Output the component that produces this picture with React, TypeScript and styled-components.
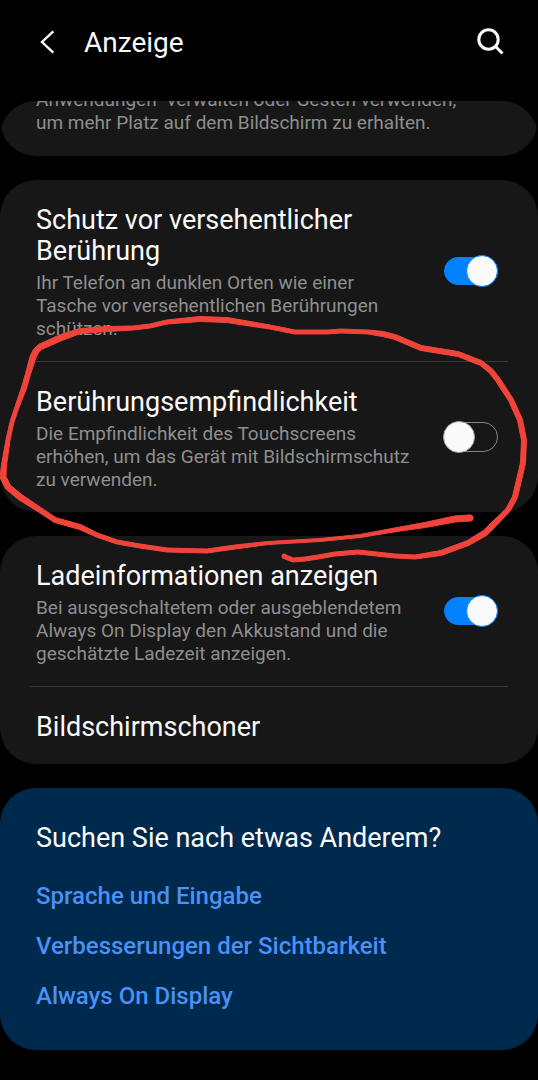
import { useState } from "react";
import styled, { createGlobalStyle } from "styled-components";

const GlobalStyle = createGlobalStyle`
  *, *::before, *::after { box-sizing: border-box; }
  body {
    margin: 0;
    background: #000;
    color: #fafafa;
    font-family: Roboto, "Noto Sans", sans-serif;
  }
  h1, h2, h3, p, ul { margin: 0; padding: 0; font-weight: 400; }
`;

const Screen = styled.div`
  position: relative;
  overflow: hidden;
  min-height: 100vh;
  background: #000;
`;

const Header = styled.header`
  display: flex;
  align-items: center;
  padding: 25px 32px 40px 36px;
`;

const IconButton = styled.button`
  display: flex;
  align-items: center;
  justify-content: center;
  height: 36px;
  padding: 0;
  border: 0;
  background: none;
  color: #fafafa;
`;

const PageTitle = styled.h1`
  flex: 1;
  margin-left: 24px;
  font-size: 28px;
  line-height: 36px;
`;

const Viewport = styled.main`
  display: flex;
  flex-direction: column;
  gap: 24px;
  overflow: hidden;
  padding-bottom: 30px;
  border-radius: 36px 36px 0 0;
`;

const Card = styled.section`
  border-radius: 36px;
  background: #171717;
`;

/* The card that is scrolled partly under the header */
const ScrolledCard = styled(Card)`
  margin-top: -13px;
  padding: 0 60px 22px 36px;
  border-radius: 0 0 36px 36px;
`;

const Row = styled.div`
  display: flex;
  align-items: center;
  justify-content: space-between;
  gap: 28px;
  padding: 21px 40px 21px 36px;
`;

const RowText = styled.div`
  display: flex;
  flex-direction: column;
  gap: 4px;
  padding-top: 4px;
`;

const RowTitle = styled.label`
  font-size: 27px;
  line-height: 31px;
`;

const Description = styled.p`
  color: #8e8e8e;
  font-size: 19px;
  line-height: 23px;
`;

const Divider = styled.hr`
  height: 1px;
  margin: 0 30px;
  border: 0;
  background: #383838;
`;

const Toggle = styled.input`
  position: relative;
  flex: none;
  appearance: none;
  width: 54px;
  height: 30px;
  margin: 0;
  border: 1px solid #858585;
  border-radius: 16px;

  &::before {
    content: "";
    position: absolute;
    top: -2px;
    left: -2px;
    width: 32px;
    height: 32px;
    border: 1px solid #a0a0a0;
    border-radius: 50%;
    background: #fafafa;
  }

  &:checked {
    height: 28px;
    border-color: #0381fe;
    background: #0381fe;
  }

  &:checked::before {
    top: -3px;
    left: 21px;
    border-color: #0381fe;
  }
`;

const PlainButton = styled.button`
  padding: 0;
  border: 0;
  background: none;
  color: inherit;
  font: inherit;
  font-size: 27px;
  line-height: 31px;
`;

const SuggestionCard = styled(Card)`
  padding: 34px 36px 42px;
  background: #002a4d;
`;

const SuggestionTitle = styled.h2`
  font-size: 27px;
  line-height: 32px;
`;

const LinkList = styled.ul`
  display: flex;
  flex-direction: column;
  gap: 26px;
  margin-top: 30px;
  list-style: none;
`;

const SuggestionLink = styled.a`
  display: block;
  color: #4a90f5;
  font-size: 24px;
  font-weight: 500;
  line-height: 24px;
  text-decoration: none;
`;

const Marker = styled.svg`
  position: absolute;
  top: 0;
  left: 0;
  pointer-events: none;
`;

type Sample = [x: number, y: number, width: number];

const MARKER_STROKE: Sample[] = [
  [470, 518, 6], [455, 519, 6], [425, 525, 5], [400, 529, 4], [360, 536, 3], [320, 540, 3],
  [268, 543, 3], [235, 547, 4], [207, 551, 4], [167, 550, 4], [140, 546, 4], [117, 542, 4],
  [97, 535, 4], [80, 527, 5], [55, 520, 5], [40, 510, 5], [20, 497, 6], [8, 487, 6],
  [3, 477, 6], [4, 465, 5], [8, 440, 4], [12, 422, 4], [17, 407, 4], [24, 388, 5], [28, 374, 5],
  [33, 357, 6], [36, 351, 6], [40, 347, 6], [60, 338, 6], [80, 331, 5], [107, 329, 5], [133, 328, 4],
  [150, 326, 4], [167, 322, 4], [200, 319, 5], [227, 320, 5], [270, 327, 4], [295, 332, 4],
  [328, 332, 4], [341, 331, 4], [368, 332, 4], [383, 334, 5], [395, 337, 5], [421, 348, 5], [458, 354, 5],
  [481, 363, 5], [491, 371, 5], [498, 380, 5], [511, 400, 5], [520, 420, 5], [524, 440, 5],
  [523, 463, 5], [515, 497, 5], [508, 510, 5], [485, 533, 6], [468, 543, 5], [441, 553, 5],
  [415, 557, 4], [395, 556, 4], [358, 552, 4], [335, 554, 4], [318, 557, 4], [305, 559, 4],
  [293, 560, 4], [283, 556, 4],
];

/* Outline of a pen stroke whose width changes along its way */
function strokeOutline(samples: Sample[]): string {
  const left: string[] = [];
  const right: string[] = [];
  samples.forEach(([x, y, w], i) => {
    const before = samples[Math.max(0, i - 1)];
    const after = samples[Math.min(samples.length - 1, i + 1)];
    const dx = after[0] - before[0];
    const dy = after[1] - before[1];
    const k = w / 2 / Math.hypot(dx, dy);
    left.push(`${(x - dy * k).toFixed(1)} ${(y + dx * k).toFixed(1)}`);
    right.unshift(`${(x + dy * k).toFixed(1)} ${(y - dx * k).toFixed(1)}`);
  });
  return `M${left.concat(right).join("L")}Z`;
}

function PenMarking() {
  const first = MARKER_STROKE[0];
  return (
    <Marker width="538" height="1080" viewBox="0 0 538 1080" fill="#f0443a" aria-hidden="true">
      <path d={strokeOutline(MARKER_STROKE)} stroke="#f0443a" strokeWidth="1" strokeLinejoin="round" />
      <circle cx={first[0]} cy={first[1]} r="3.5" />
      <circle cx="284" cy="556" r="2.5" />
    </Marker>
  );
}

interface SettingProps {
  id: string;
  title: string;
  description: string;
  initial: boolean;
}

function Setting({ id, title, description, initial }: SettingProps) {
  const [on, setOn] = useState(initial);
  return (
    <Row>
      <RowText>
        <RowTitle htmlFor={id}>{title}</RowTitle>
        <Description>{description}</Description>
      </RowText>
      <Toggle id={id} type="checkbox" role="switch" checked={on} onChange={() => setOn(!on)} />
    </Row>
  );
}

export default function App() {
  return (
    <>
      <GlobalStyle />
      <Screen>
        <Header>
          <IconButton aria-label="Zurück">
            <svg width="24" height="36" viewBox="0 0 24 36" fill="none" stroke="currentColor" strokeWidth="2.4">
              <path d="M17.3 6.3 6 17l11.3 10.7" />
            </svg>
          </IconButton>
          <PageTitle>Anzeige</PageTitle>
          <IconButton aria-label="Suchen">
            <svg width="32" height="32" viewBox="0 0 32 32" fill="none" stroke="currentColor" strokeWidth="3">
              <circle cx="14.5" cy="12.5" r="9.7" />
              <path d="m21.3 19.3 7.2 7.2" />
            </svg>
          </IconButton>
        </Header>
        <Viewport>
          <ScrolledCard>
            <Description>
              Anwendungen“ verwalten oder Gesten verwenden, um mehr Platz auf dem Bildschirm zu erhalten.
            </Description>
          </ScrolledCard>
          <Card>
            <Setting
              id="accidental-touch"
              title="Schutz vor versehentlicher Berührung"
              description="Ihr Telefon an dunklen Orten wie einer Tasche vor versehentlichen Berührungen schützen."
              initial={true}
            />
            <Divider />
            <Setting
              id="touch-sensitivity"
              title="Berührungsempfindlichkeit"
              description="Die Empfindlichkeit des Touchscreens erhöhen, um das Gerät mit Bildschirmschutz zu verwenden."
              initial={false}
            />
          </Card>
          <Card>
            <Setting
              id="charging-info"
              title="Ladeinformationen anzeigen"
              description="Bei ausgeschaltetem oder ausgeblendetem Always On Display den Akkustand und die geschätzte Ladezeit anzeigen."
              initial={true}
            />
            <Divider />
            <Row>
              <RowText>
                <PlainButton>Bildschirmschoner</PlainButton>
              </RowText>
            </Row>
          </Card>
          <SuggestionCard>
            <SuggestionTitle>Suchen Sie nach etwas Anderem?</SuggestionTitle>
            <LinkList>
              <li><SuggestionLink href="#sprache">Sprache und Eingabe</SuggestionLink></li>
              <li><SuggestionLink href="#sichtbarkeit">Verbesserungen der Sichtbarkeit</SuggestionLink></li>
              <li><SuggestionLink href="#aod">Always On Display</SuggestionLink></li>
            </LinkList>
          </SuggestionCard>
        </Viewport>
        <PenMarking />
      </Screen>
    </>
  );
}
